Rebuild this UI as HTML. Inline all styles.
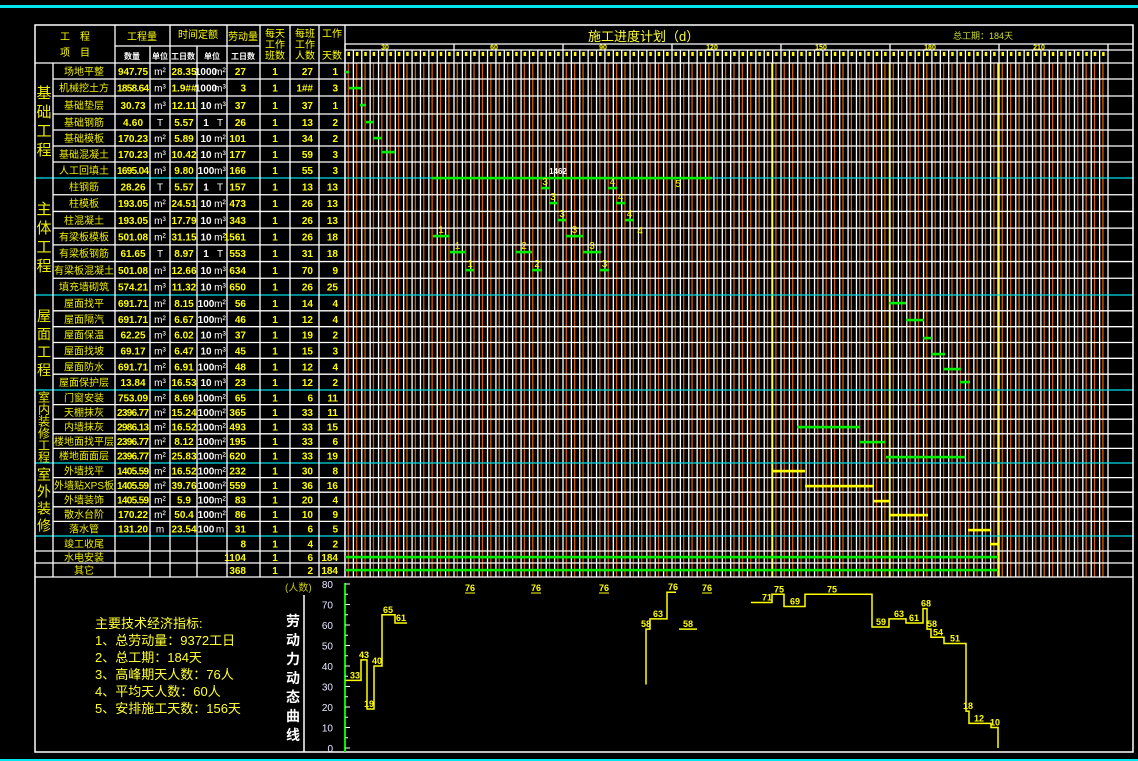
<!DOCTYPE html>
<html><head><meta charset="utf-8"><style>
html,body{margin:0;padding:0;background:#000;}
svg{display:block;}
text{font-family:"Liberation Sans","Noto Sans CJK SC","WenQuanYi Zen Hei",sans-serif;}
</style></head><body>
<svg id="s" width="1138" height="761" xmlns="http://www.w3.org/2000/svg" style="background:#000">
<rect x="0" y="5" width="1138" height="3" fill="#00e5ee"/>
<rect x="0" y="759" width="1138" height="2" fill="#00e5ee"/>
<g id="g"></g>
<text x="95" y="628" font-size="13" fill="#ffff33">主要技术经济指标:</text>
<text x="95" y="645" font-size="13" fill="#ffff33">1、总劳动量：9372工日</text>
<text x="95" y="662" font-size="13" fill="#ffff33">2、总工期：184天</text>
<text x="95" y="679" font-size="13" fill="#ffff33">3、高峰期天人数：76人</text>
<text x="95" y="696" font-size="13" fill="#ffff33">4、平均天人数：60人</text>
<text x="95" y="713" font-size="13" fill="#ffff33">5、安排施工天数：156天</text>
<text x="285" y="591" font-size="10" fill="#c8c800">(人数)</text>
<text x="588" y="41" font-size="13" fill="#ffff33">施工进度计划（d）</text>
<text x="953" y="39" font-size="9" fill="#ccdd33">总工期：184天</text>
<g font-size="14" font-weight="bold" fill="#fff" text-anchor="middle">
<text x="293" y="626">劳</text><text x="293" y="645">动</text><text x="293" y="664">力</text><text x="293" y="683">动</text><text x="293" y="702">态</text><text x="293" y="721">曲</text><text x="293" y="740">线</text>
</g>
</svg>
<script>
var g=document.getElementById('g');var h='';
function L(x1,y1,x2,y2,c,w){h+='<line x1="'+x1+'" y1="'+y1+'" x2="'+x2+'" y2="'+y2+'" stroke="'+c+'" stroke-width="'+(w||1)+'"/>';}
function T(x,y,t,fs,c,a,extra){h+='<text x="'+x+'" y="'+y+'" font-size="'+fs+'" fill="'+c+'" text-anchor="'+(a||'middle')+'" '+(extra||'')+'>'+t+'</text>';}
function R(x,y,w,hh,c){h+='<rect x="'+x+'" y="'+y+'" width="'+w+'" height="'+hh+'" fill="'+c+'"/>';}
var W='#ffffff',O='#d06000',Y='#ffff00',G='#00ee00',C='#00dde8';
var rb=[63,79,96,114,130,146,162,178];
for(var i=1;i<=7;i++)rb.push(178+i*117/7);
for(var i=1;i<=6;i++)rb.push(295+i*95/6);
for(var i=1;i<=5;i++)rb.push(390+i*73/5);
for(var i=1;i<=5;i++)rb.push(463+i*73/5);
rb.push(551,563,577);
var cw=(1108-345)/91;
for(var k=0;k<=91;k++){var x=345+k*cw;L(x,50,x,577,W,1.3);if(k<91)L(x+3.3,63,x+3.3,577,O,1.3);
 if(k<91){var top=(k%2==0);R(x+2.5,top?52:57,2.5,top?4:6,Y);}}
for(var m=0;m<=7;m++){var x=345+m*13*cw;L(x,44,x,50,W,1.3);}
var ml=['30','60','90','120','150','180','210'];
for(var m=0;m<7;m++){T(345+m*13*cw+40,49.5,ml[m],7,Y,'middle','font-weight="bold"');}
[772,889.5,998].forEach(function(x){L(x,63,x,577,Y,1.5);});
for(var i=0;i<rb.length;i++){var y=rb[i];var cy=[178,295,390,463,536].indexOf(Math.round(y))>=0;
 var xs=(i==0)?35:53; if([7,14,20,25,30,31,32,33].indexOf(i)>=0)xs=35;
 L(xs,y,1133,y,cy?C:W,1.3);}
L(345,44,1133,44,W,1.3);L(345,50,1133,50,W,1.3);
L(115,46,260,46,W,1.3);
h+='<rect x="35" y="25" width="1098" height="727" fill="none" stroke="#fff" stroke-width="1.5"/>';
[53,115,150,170,197,227,260,290,319,345].forEach(function(x){var y1=(x==150||x==197)?46:25;if(x==53)y1=63;L(x,y1,x,577,W,1.3);});
T(75,40,'工　程',10,Y);T(75,56,'项　目',10,Y);
T(142,40,'工程量',10,Y);T(198,38,'时间定额',10,Y);T(243,40,'劳动量',10,Y);
T(132,59,'数量',8,W,'middle','font-weight="bold"');T(160,59,'单位',8,W,'middle','font-weight="bold"');
T(183,59,'工日数',8,W,'middle','font-weight="bold"');T(212,59,'单位',8,W,'middle','font-weight="bold"');T(243,59,'工日数',8,W,'middle','font-weight="bold"');
T(275,37,'每天',10,Y);T(275,48,'工作',10,Y);T(275,59,'班数',10,Y);
T(305,37,'每班',10,Y);T(305,48,'工作',10,Y);T(305,59,'人数',10,Y);
T(332,37,'工作',10,Y);T(332,59,'天数',10,Y);
var d=[
['场地平整','947.75','m²','28.35','1000','m²','27','1','27','1'],
['机械挖土方','1858.64','m³','1.9##','1000','m³','3','1','1##','3'],
['基础垫层','30.73','m³','12.11','10','m³','37','1','37','1'],
['基础钢筋','4.60','T','5.57','1','T','26','1','13','2'],
['基础模板','170.23','m²','5.89','10','m²','101','1','34','2'],
['基础混凝土','170.23','m³','10.42','10','m³','177','1','59','3'],
['人工回填土','1695.04','m³','9.80','100','m³','166','1','55','3'],
['柱钢筋','28.26','T','5.57','1','T','157','1','13','13'],
['柱模板','193.05','m²','24.51','10','m²','473','1','26','13'],
['柱混凝土','193.05','m³','17.79','10','m³','343','1','26','13'],
['有梁板模板','501.08','m²','31.15','10','m²','1561','1','26','18'],
['有梁板钢筋','61.65','T','8.97','1','T','553','1','31','18'],
['有梁板混凝土','501.08','m³','12.66','10','m³','634','1','70','9'],
['填充墙砌筑','574.21','m³','11.32','10','m³','650','1','26','25'],
['屋面找平','691.71','m²','8.15','100','m²','56','1','14','4'],
['屋面隔汽','691.71','m²','6.67','100','m²','46','1','12','4'],
['屋面保温','62.25','m³','6.02','10','m³','37','1','19','2'],
['屋面找坡','69.17','m³','6.47','10','m³','45','1','15','3'],
['屋面防水','691.71','m²','6.91','100','m²','48','1','12','4'],
['屋面保护层','13.84','m³','16.53','10','m³','23','1','12','2'],
['门窗安装','753.09','m²','8.69','100','m²','65','1','6','11'],
['天棚抹灰','2396.77','m²','15.24','100','m²','365','1','33','11'],
['内墙抹灰','2986.13','m²','16.52','100','m²','493','1','33','15'],
['楼地面找平层','2396.77','m²','8.12','100','m²','195','1','33','6'],
['楼地面面层','2396.77','m²','25.83','100','m²','620','1','33','19'],
['外墙找平','1405.59','m²','16.52','100','m²','232','1','30','8'],
['外墙贴XPS板','1405.59','m²','39.76','100','m²','559','1','36','16'],
['外墙装饰','1405.59','m²','5.9','100','m²','83','1','20','4'],
['散水台阶','170.22','m²','50.4','100','m²','86','1','10','9'],
['落水管','131.20','m','23.54','100','m','31','1','6','5'],
['竣工收尾','','','','','','8','1','4','2'],
['水电安装','','','','','','1104','1','6','184'],
['其它','','','','','','368','1','2','184']];
for(var i=0;i<d.length;i++){var r=d[i],y=(rb[i]+rb[i+1])/2+4;
 T(84,y,r[0],10,'#eeee00');
 T(133,y,r[1],10,Y,'middle','font-weight="bold" textLength="'+(r[1].length>6?32:Math.min(30,r[1].length*5))+'"');
 T(160,y,r[2],10,W);
 T(184,y,r[3],10,Y,'middle','font-weight="bold"');
 T(206,y,r[4],10,W,'middle','font-weight="bold"');T(220,y,r[5],10,W);
 T(246,y,r[6],10,Y,'end','font-weight="bold"');T(275,y,r[7],10,Y,'middle','font-weight="bold"');
 T(313,y,r[8],10,Y,'end','font-weight="bold"');T(338,y,r[9],10,Y,'end','font-weight="bold"');}
function V(x,y0,y1,s,st,fs){var n=s.length,c=(y0+y1)/2,s0=c-st*n/2;for(var j=0;j<n;j++)T(x,s0+st*(j+0.5)+fs*0.4,s[j],fs,'#eeee00');}
V(44,63,178,'基础工程',19,15);V(44,178,295,'主体工程',19,15);V(44,295,390,'屋面工程',18,14);V(44,390,463,'室内装修工程',12,12);V(44,463,536,'室外装修',17,14);
function B(x1,x2,y,c){R(x1,y-1.2,x2-x1,2.6,c||G);}
B(345,349,72);B(349,361,88);B(360,366,105);B(366,374,122);B(373,382,138);B(382,395,152);
B(432,712,178);T(558,174,'1462',8,W,'middle','font-weight="bold"');
[[188,[[541,549,'3'],[608,617,'4']]],[203,[[549,557,'3'],[616,625,'4']]],[220,[[558,566,'3'],[625,634,'4']]],
 [236,[[433,449,'1'],[566,583,'3']]],[252,[[450,465,'1'],[516,532,'2'],[583,601,'3']]],[270,[[466,474,'1'],[532,542,'2'],[600,609,'3']]]].forEach(function(a){
 a[1].forEach(function(b){B(b[0],b[1],a[0]);T((b[0]+b[1])/2,a[0]-3,b[2],10,Y);});});
T(678,187,'5',10,Y);T(640,234,'4',10,Y);
B(889,906,303);B(906,924,320);B(923,932,338);B(931,945,354);B(944,961,369);B(960,970,382);
B(797,860,427);B(860,885,442);B(886,965,457);
B(772,805,471,Y);B(805,873,486,Y);B(873,890,501,Y);B(889,928,515,Y);B(968,991,530,Y);B(990,999,544,Y);
B(345,998,557);B(345,998,570);
L(304,595,304,752,W,1.5);
L(345,583,345,752,G,2);
function vy(v){return 748-v*2.05;}
for(var v=0;v<=80;v+=10){T(333,vy(v)+4,v,10,'#e8e8ff','end');L(345,vy(v),350,vy(v),W,1);}
for(var v=5;v<=80;v+=10){L(345,vy(v),348,vy(v),W,1);}
function P(pts){var s='';pts.forEach(function(p,i){s+=(i?'L':'M')+p[0]+' '+vy(p[1]);});h+='<path d="'+s+'" fill="none" stroke="'+Y+'" stroke-width="1.5"/>';}
P([[345,33],[361,33],[361,43],[367,43],[367,19],[374,19],[374,40],[382,40],[382,65],[395,65],[395,61],[407,61]]);
P([[646,31],[646,58],[650,58],[650,63],[667,63],[667,76],[676,76]]);
P([[679,58],[697,58]]);
P([[751,71],[772,71],[772,75],[784,75],[784,69],[805,69],[805,75],[872,75],[872,59],[889,59],[889,63],[906,63],[906,61],[923,61],[923,68],[927,68],[927,58],[931,58],[931,54],[944,54],[944,51],[966,51],[966,18],[969,18],[969,12],[991,12],[991,10],[998,10],[998,0]]);
var lb=[[355,33,'33'],[364,43,'43'],[369,19,'19'],[377,40,'40'],[388,65,'65'],[401,61,'61'],[646,58,'58'],[658,63,'63'],[673,76,'76'],[688,58,'58'],
[767,71,'71'],[779,75,'75'],[795,69,'69'],[832,75,'75'],[881,59,'59'],[899,63,'63'],[914,61,'61'],[926,68,'68'],[932,58,'58'],[938,54,'54'],[955,51,'51'],[968,18,'18'],[979,12,'12'],[995,10,'10']];
lb.forEach(function(l){T(l[0],vy(l[1])-2,l[2],9,Y,'middle','font-weight="bold"');});
[470,536,604,707].forEach(function(x){T(x,591,'76',9,Y,'middle','font-weight="bold"');L(x-5,593,x+5,593,Y,1);});
g.innerHTML=h;
</script>
</body></html>
